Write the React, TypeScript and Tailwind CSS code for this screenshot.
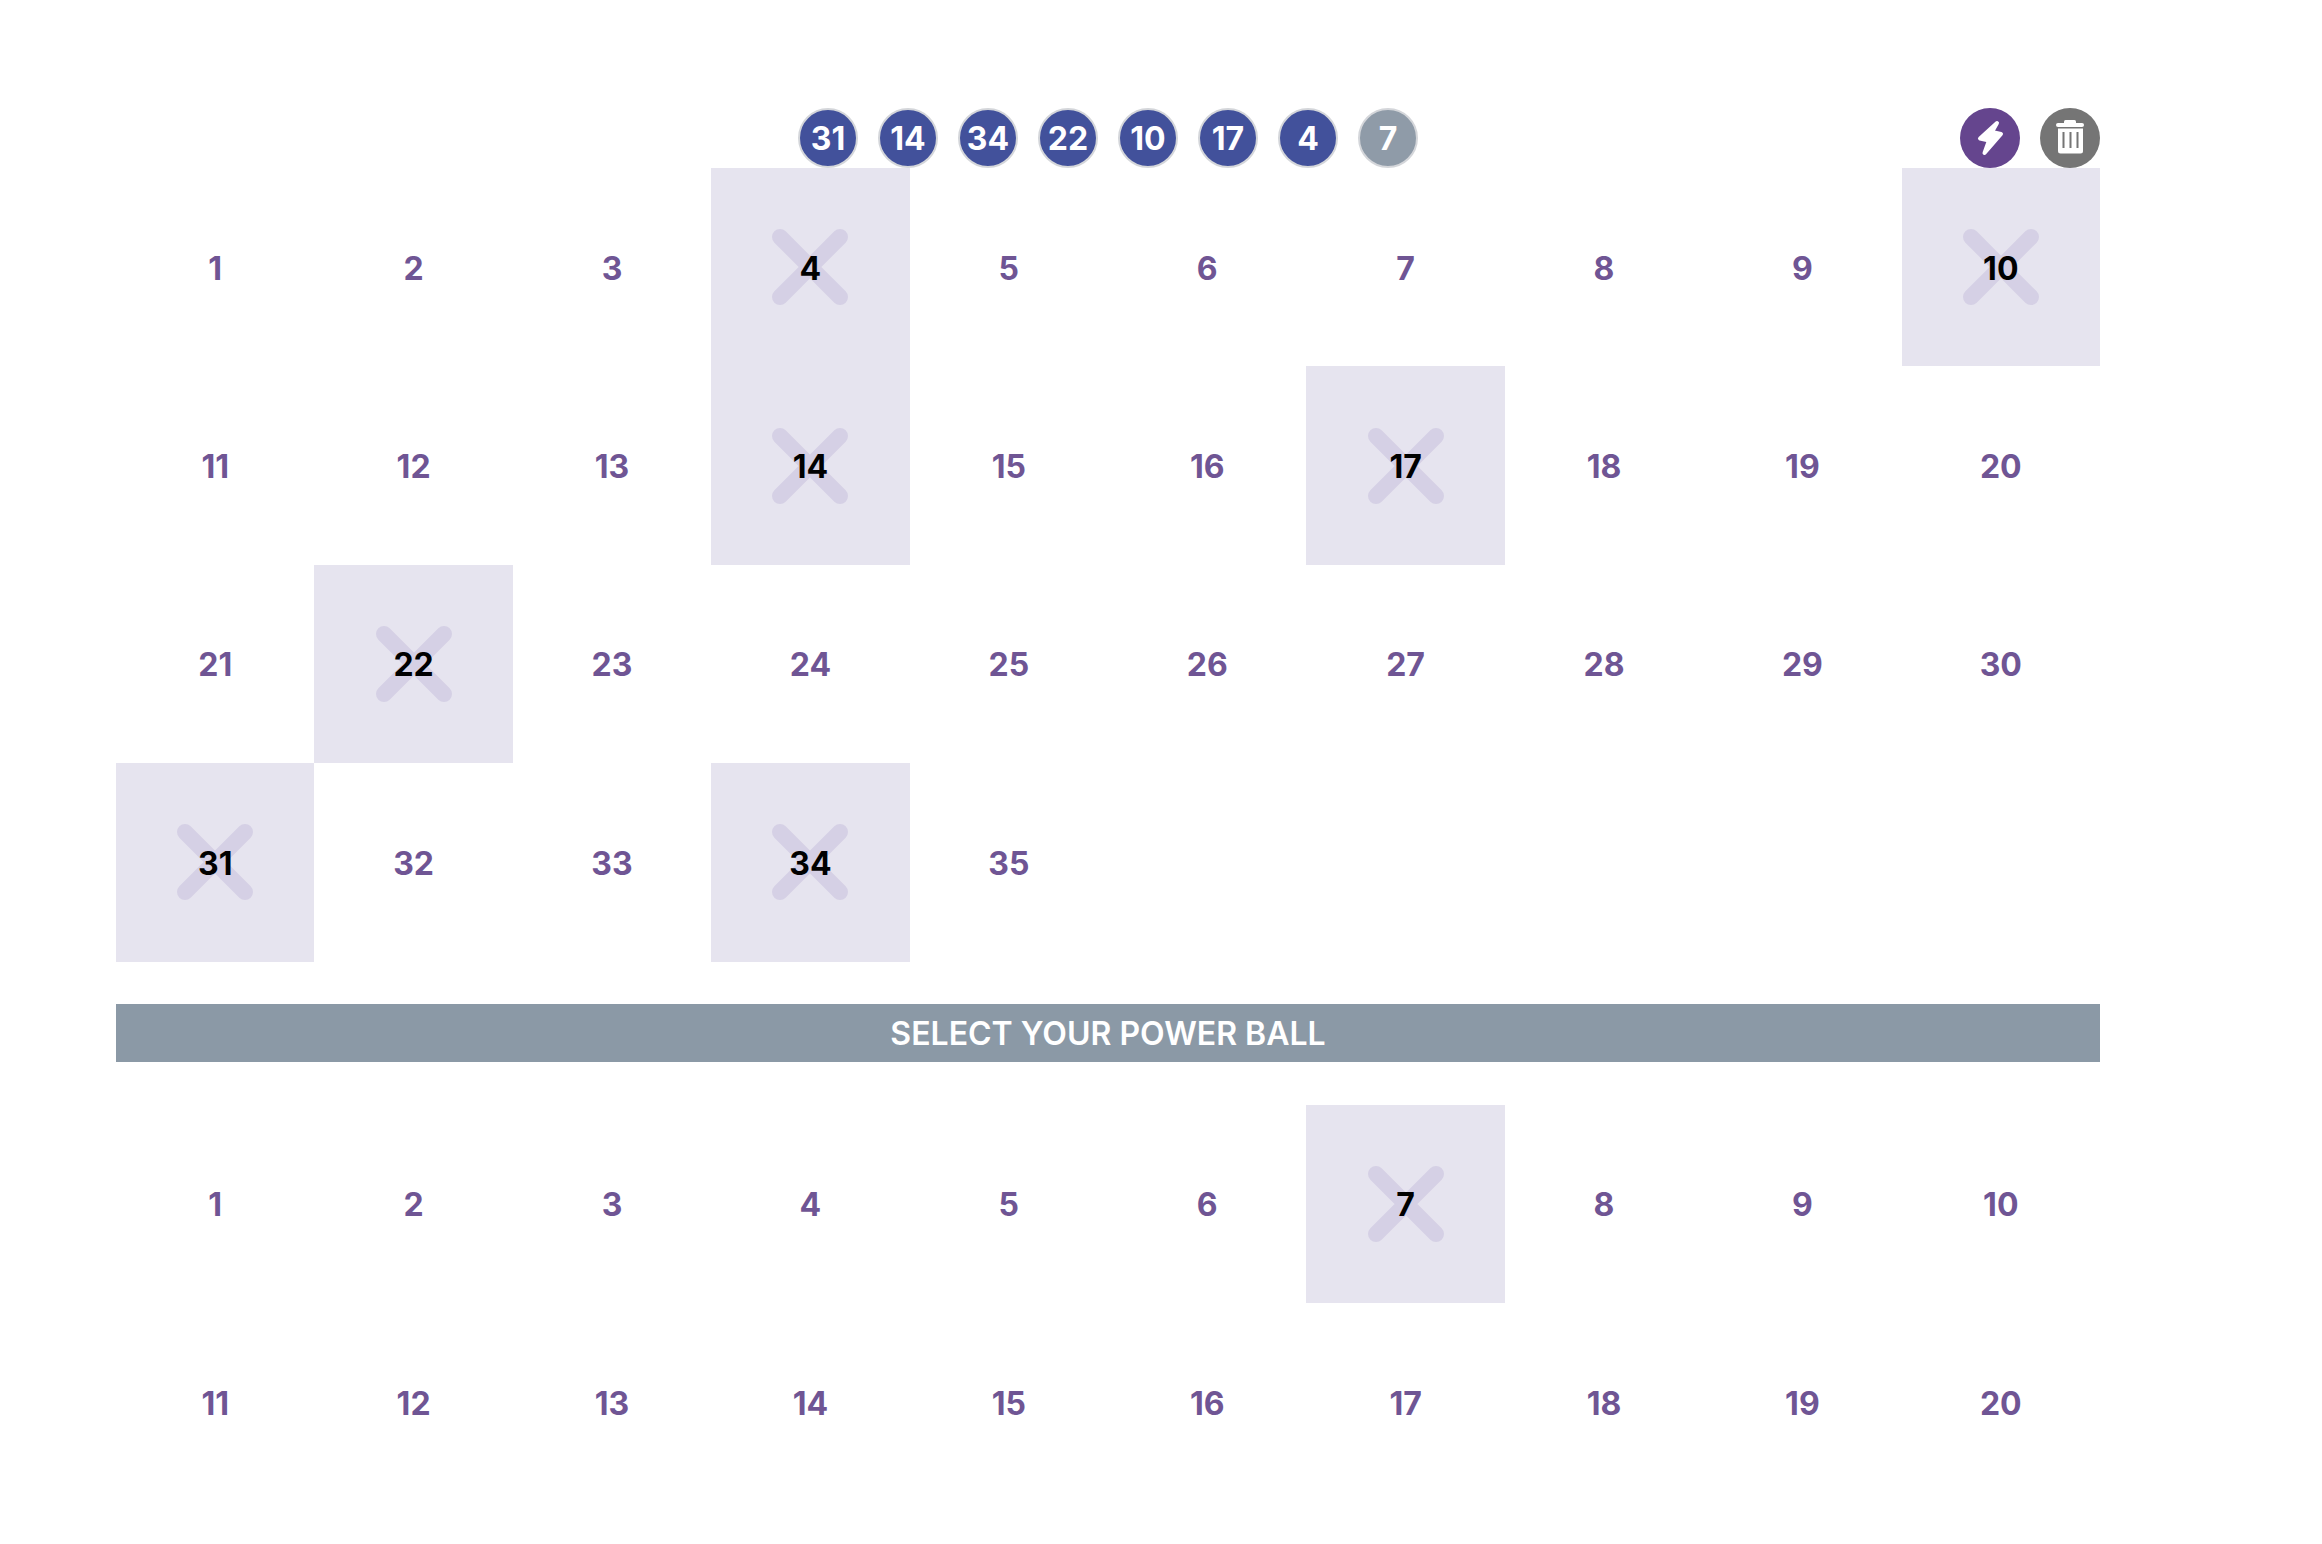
const font = "font-['Inter','Liberation_Sans',sans-serif]";

const picked = [31, 14, 34, 22, 10, 17, 4];
const mainNumbers = Array.from({ length: 35 }, (_, i) => i + 1);
const powerNumbers = Array.from({ length: 20 }, (_, i) => i + 1);

function Ball({ value, power }: { value: number; power?: boolean }) {
  return (
    <div
      className={
        power
          ? "flex h-[60px] w-[60px] items-center justify-center rounded-full border-2 border-[#d4d6da] bg-[#8f9ba8] pt-px text-[32px] font-bold text-white"
          : "flex h-[60px] w-[60px] items-center justify-center rounded-full border-2 border-[#d4d6da] bg-[#42519b] pt-px text-[32px] font-bold text-white"
      }
    >
      {value}
    </div>
  );
}

function Cell({ value, selected }: { value: number; selected: boolean }) {
  if (selected) {
    return (
      <div className="relative flex h-[198.4px] items-center justify-center bg-[#e6e4ef] pt-[3px] text-[32px] font-bold text-black">
        <svg className="absolute left-1/2 top-1/2 h-[76px] w-[76px] -translate-x-1/2 -translate-y-1/2" viewBox="0 0 76 76">
          <path d="M8 8L68 68M68 8L8 68" stroke="#d5d0e5" strokeWidth="16" strokeLinecap="round" fill="none" />
        </svg>
        <span className="relative">{value}</span>
      </div>
    );
  }
  return (
    <div className="flex h-[198.4px] items-center justify-center pt-[3px] text-[32px] font-bold text-[#6f5594]">
      {value}
    </div>
  );
}

export default function App() {
  return (
    <div className={`min-h-[1544px] bg-white pl-[116px] pr-[222px] pt-[108px] ${font}`}>
      <div className="grid h-[60px] grid-cols-[1fr_auto_1fr]">
        <div />
        <div className="flex gap-5">
          {picked.map((n) => (
            <Ball key={n} value={n} />
          ))}
          <Ball value={7} power />
        </div>
        <div className="flex justify-end gap-5">
          <button className="flex h-[60px] w-[60px] items-center justify-center rounded-full bg-[#65458e]">
            <svg width="60" height="60" viewBox="0 0 60 60">
              <path
                d="M37 15L20 30.5L29 32.5L24.5 45L41 26L32 24Z"
                fill="white"
                stroke="white"
                strokeWidth="4"
                strokeLinejoin="round"
              />
            </svg>
          </button>
          <button className="flex h-[60px] w-[60px] items-center justify-center rounded-full bg-[#757575]">
            <svg width="60" height="60" viewBox="0 0 60 60">
              <rect x="16" y="15" width="28" height="4" rx="2" fill="white" />
              <rect x="24" y="12" width="12" height="4" rx="1.5" fill="white" />
              <path d="M18 20.5H43V43a2.5 2.5 0 0 1-2.5 2.5H20.5A2.5 2.5 0 0 1 18 43Z" fill="white" />
              <path d="M23.5 24V40M30.5 24V40M37.5 24V40" stroke="#757575" strokeWidth="2" />
            </svg>
          </button>
        </div>
      </div>

      <div className="grid grid-cols-10">
        {mainNumbers.map((n) => (
          <Cell key={n} value={n} selected={picked.includes(n)} />
        ))}
      </div>

      <div className="mt-[42px] flex h-[58px] items-center justify-center bg-[#8b99a6] pt-[2px] text-[32px] font-semibold text-white">
        SELECT YOUR POWER BALL
      </div>

      <div className="mt-[43px] grid grid-cols-10">
        {powerNumbers.map((n) => (
          <Cell key={n} value={n} selected={n === 7} />
        ))}
      </div>
    </div>
  );
}
